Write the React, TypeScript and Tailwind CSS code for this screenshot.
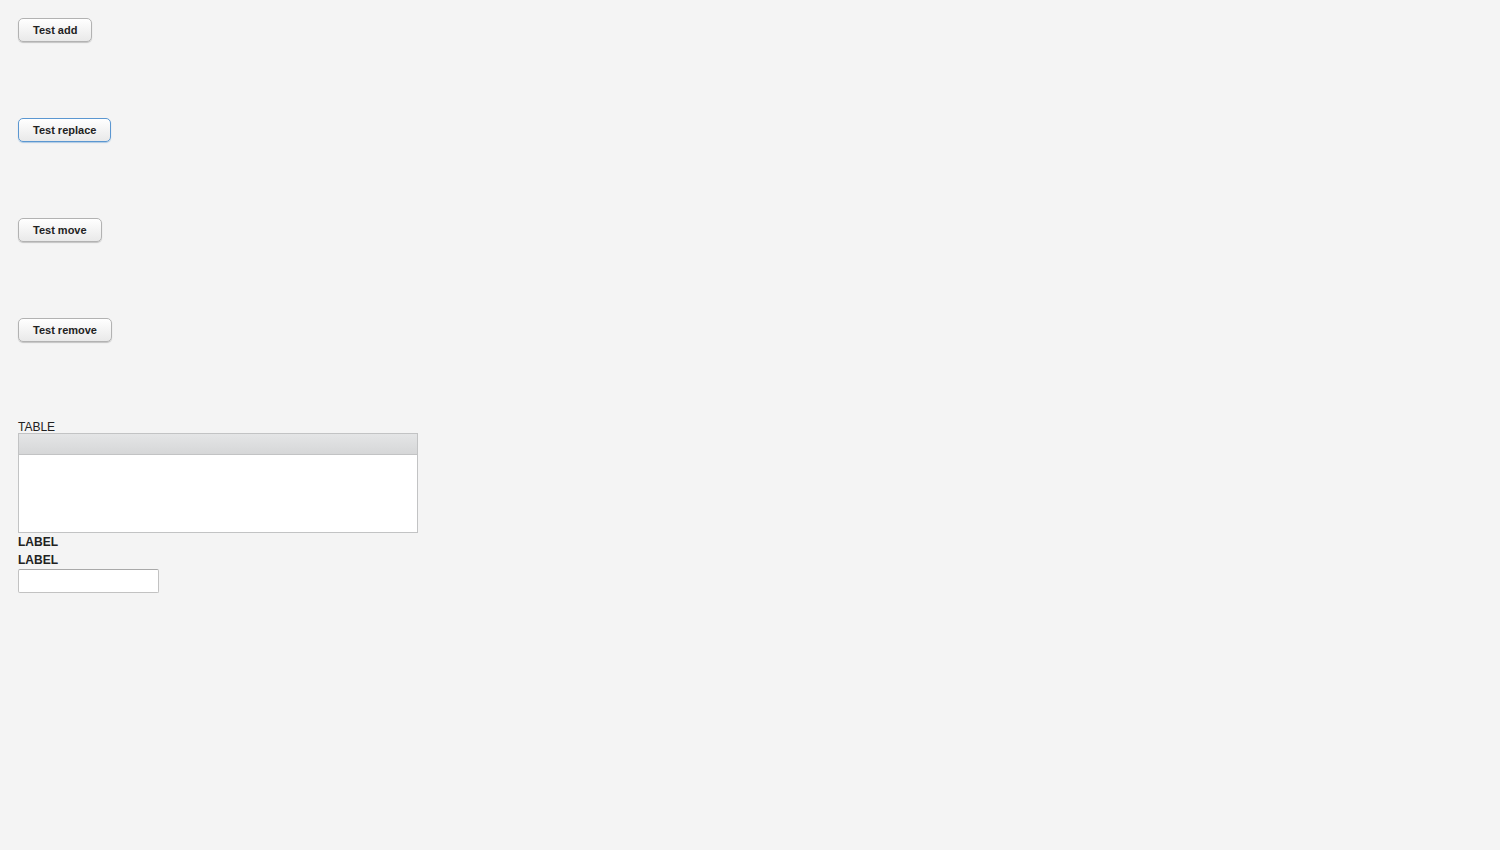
import React from "react";

const font = { fontFamily: '"Liberation Sans", Arial, sans-serif' };

function Btn({ label, focused }: { label: string; focused?: boolean }) {
  return (
    <button
      className={
        "block h-[24px] px-[14px] rounded-[5px] border text-[11px] font-bold text-[#222] bg-gradient-to-b from-white to-[#e9e9e9] leading-none " +
        (focused
          ? "border-[#5b97d1] shadow-[0_1px_1px_rgba(91,151,209,0.45)]"
          : "border-[#b2b2b2] shadow-[0_1px_1px_rgba(0,0,0,0.2)]")
      }
      style={font}
    >
      {label}
    </button>
  );
}

export default function App() {
  return (
    <div className="w-[1500px] h-[850px] bg-[#f4f4f4] overflow-hidden" style={font}>
      <div className="pt-[18px] pl-[18px] flex flex-col items-start">
        <div className="h-[100px] flex items-start"><Btn label="Test add" /></div>
        <div className="h-[100px] flex items-start"><Btn label="Test replace" focused /></div>
        <div className="h-[100px] flex items-start"><Btn label="Test move" /></div>
        <div className="h-[100px] flex items-start"><Btn label="Test remove" /></div>
        <div className="h-[15px] pt-[2px] text-[12px] text-[#222] leading-[15px]">TABLE</div>
        <div className="w-[400px] h-[100px] border border-[#c2c3c4] bg-white flex flex-col">
          <div className="h-[21px] border-b border-[#c2c3c4] bg-gradient-to-b from-[#e4e5e6] to-[#d6d7d8]" />
        </div>
        <div className="text-[12px] font-bold text-[#222] leading-[18px]">LABEL</div>
        <div className="text-[12px] font-bold text-[#222] leading-[18px]">LABEL</div>
        <div className="w-[141px] h-[24px] bg-white border border-[#c2c2c2] border-t-[#a9a9a9] rounded-[2px]" />
      </div>
    </div>
  );
}
